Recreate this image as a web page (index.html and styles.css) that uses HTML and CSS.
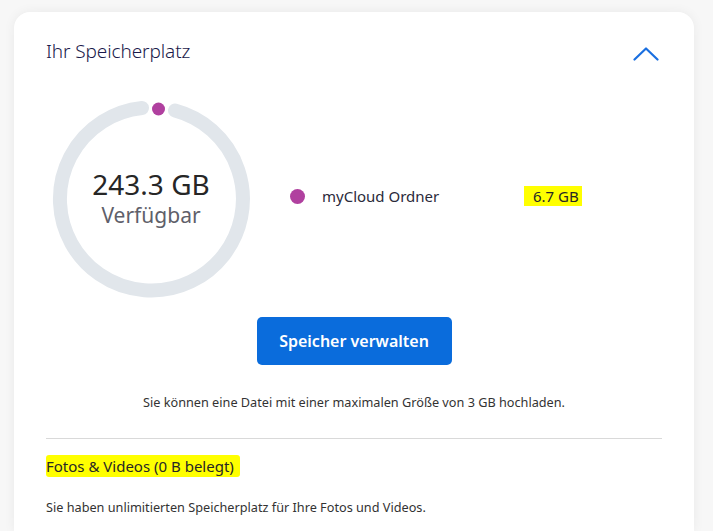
FILE: index.html
```html
<!DOCTYPE html>
<html lang="de">
<head>
<meta charset="utf-8">
<title>Ihr Speicherplatz</title>
<link rel="stylesheet" href="styles.css">
</head>
<body>
<section class="card">
  <header class="card-head">
    <h2 class="title">Ihr Speicherplatz</h2>
    <svg class="chevron" width="26" height="14" viewBox="0 0 26 14"><path d="M1.5 12.5 L13 1.5 L24.5 12.5" fill="none" stroke="#1a6fe0" stroke-width="2.2" stroke-linecap="round" stroke-linejoin="round"/></svg>
  </header>
  <div class="chart-row">
    <div class="ring">
      <svg class="ring-svg" width="200" height="200" viewBox="0 0 200 200">
        <path d="M124 11.6 A91.5 91.5 0 1 1 91 9" fill="none" stroke="#e1e6eb" stroke-width="14" stroke-linecap="round"/>
        <circle cx="107.5" cy="10" r="6.5" fill="#b0409f"/>
      </svg>
      <div class="ring-text">
        <div class="amount">243.3 GB</div>
        <div class="avail">Verfügbar</div>
      </div>
    </div>
    <div class="legend">
      <span class="legend-dot"></span>
      <span class="legend-name">myCloud Ordner</span>
      <span class="legend-size">6.7 GB</span>
    </div>
  </div>
  <div class="actions">
    <button class="btn" type="button">Speicher verwalten</button>
  </div>
  <p class="note">Sie können eine Datei mit einer maximalen Größe von 3 GB hochladen.</p>
  <hr class="divider">
  <h3 class="subtitle"><span class="mark">Fotos &amp; Videos (0 B belegt)</span></h3>
  <p class="text">Sie haben unlimitierten Speicherplatz für Ihre Fotos und Videos.</p>
</section>
</body>
</html>
```
FILE: styles.css
```css
html, body {
  margin: 0;
  padding: 0;
}
body {
  background: #f7f7f7;
  font-family: "Noto Sans", "Open Sans", sans-serif;
  color: #262626;
  height: 531px;
  overflow: hidden;
}
.card {
  margin: 12px 19px 0 14px;
  background: #fff;
  border-radius: 16px 16px 0 0;
  box-shadow: 0 0 12px rgba(0, 0, 0, 0.06);
  padding: 28px 32px 0 32px;
  box-sizing: border-box;
  height: 519px;
}
.card-head {
  display: flex;
  justify-content: space-between;
  align-items: center;
  height: 22px;
}
.title {
  margin: 0;
  font-size: 19px;
  font-weight: 300;
  color: #1a1a4a;
  letter-spacing: -0.1px;
}
.chevron {
  margin-right: 3px;
  margin-top: 6px;
}
.chart-row {
  display: flex;
  align-items: center;
  margin-top: 37px;
}
.ring {
  position: relative;
  width: 200px;
  height: 200px;
  margin-left: 5px;
  flex: none;
}
.ring-svg {
  display: block;
}
.ring-text {
  position: absolute;
  inset: 0;
  display: flex;
  flex-direction: column;
  align-items: center;
  justify-content: center;
  padding-bottom: 2px;
}
.amount {
  font-size: 28px;
  line-height: 34px;
  color: #262626;
}
.avail {
  font-size: 21px;
  line-height: 28px;
  color: #5f5f6a;
}
.legend {
  display: flex;
  align-items: center;
  margin-left: 39px;
  margin-top: -6px;
}
.legend-dot {
  width: 15px;
  height: 15px;
  border-radius: 50%;
  background: #b0409f;
  flex: none;
}
.legend-name {
  font-size: 15px;
  color: #2a2a3a;
  margin-left: 17px;
  width: 202px;
}
.legend-size {
  font-size: 15px;
  color: #262626;
  background: #ffff00;
  padding: 0 3px 0 9px;
  line-height: 20px;
}
.actions {
  display: flex;
  justify-content: center;
  margin-top: 18px;
}
.btn {
  width: 195px;
  height: 48px;
  border: none;
  border-radius: 5px;
  background: #0a6cdc;
  color: #fff;
  font-family: inherit;
  font-size: 16px;
  font-weight: 600;
}
.note {
  margin: 28px 0 0 0;
  text-align: center;
  font-size: 12.7px;
  color: #333;
}
.divider {
  border: none;
  border-top: 1px solid #d9d9d9;
  margin: 27px 0 0 0;
}
.subtitle {
  margin: 17px 0 0 0;
  font-size: 15px;
  font-weight: 400;
  line-height: 20px;
}
.mark {
  background: #ffff00;
  padding: 1px 6px 1px 0;
  border-radius: 3px;
}
.text {
  margin: 22px 0 0 0;
  font-size: 12.7px;
  color: #333;
}
```
